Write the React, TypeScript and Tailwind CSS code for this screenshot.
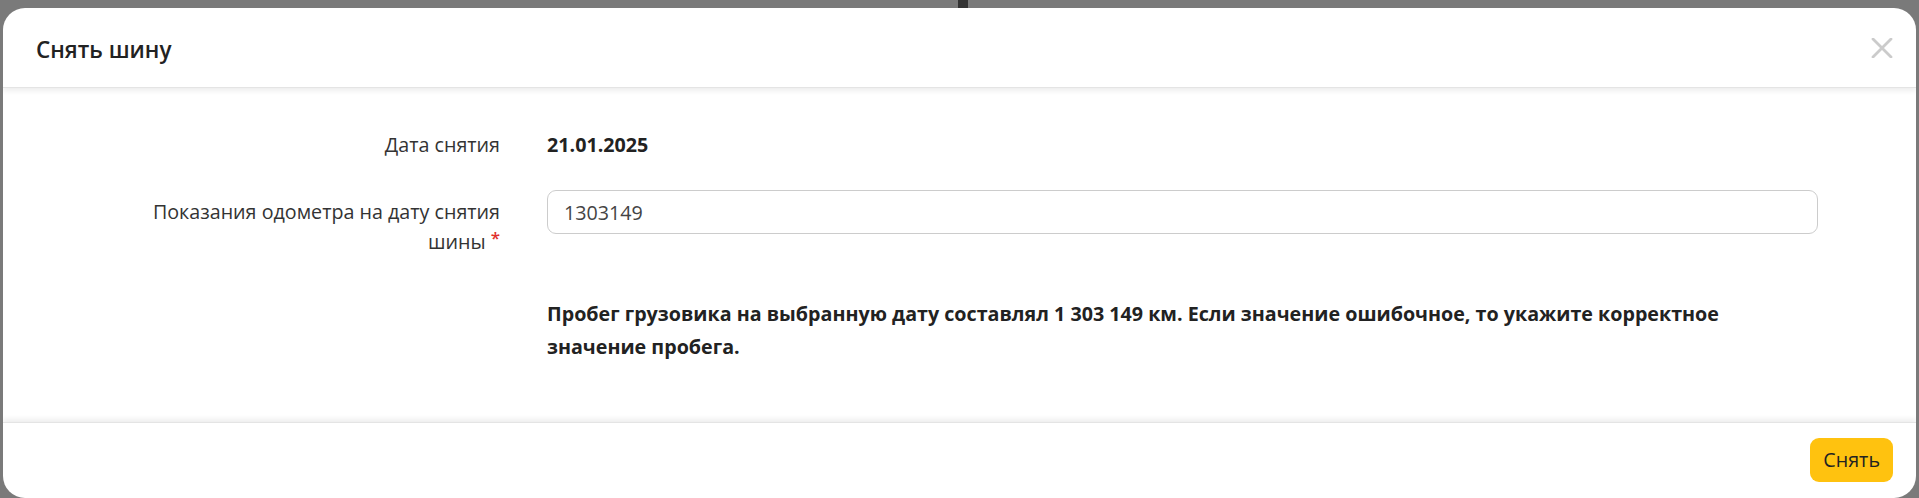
import React from 'react';

const font = { fontFamily: '"Open Sans", "Noto Sans", sans-serif' };

const FieldRow: React.FC<{ label: React.ReactNode; className?: string; labelClassName?: string; children: React.ReactNode }> = ({
    label,
    className = '',
    labelClassName = '',
    children,
}) => (
    <div className={`flex items-start ${className}`}>
        <div className={`w-[370px] flex-shrink-0 text-right text-[#333333] ${labelClassName}`}>{label}</div>
        <div className="flex-1 min-w-0 ml-[47px]">{children}</div>
    </div>
);

const App: React.FC = () => {
    return (
        <div
            className="relative h-[498px] w-full overflow-hidden bg-[#7a7a7a] pt-[8px] px-[3px]"
            style={font}
        >
            {/* page element peeking behind the overlay */}
            <div className="absolute top-0 left-[958px] w-[10px] h-[8px] bg-[#333333]"></div>

            <div className="h-[490px] bg-white rounded-[22px] flex flex-col overflow-hidden">
                {/* Header */}
                <div className="relative z-10 h-[80px] flex-shrink-0 flex items-center justify-between pl-[33px] pr-[23px] pt-[5px] border-b border-[#e4e4e4] shadow-[0_3px_5px_rgba(0,0,0,0.07)]">
                    <h2 className="text-[22.5px] font-semibold text-[#222222] leading-none">Снять шину</h2>
                    <button className="w-[22px] h-[20px] flex items-center justify-center -mt-[5px]" aria-label="Закрыть">
                        <svg width="22" height="20" viewBox="0 0 22 20" fill="none">
                            <path d="M2 1L20 19M20 1L2 19" stroke="#cbcbcb" strokeWidth="2.8" strokeLinecap="round" />
                        </svg>
                    </button>
                </div>

                {/* Body */}
                <div className="flex-1 pt-[41px] pl-[127px] pr-[98px] text-[19.7px] leading-[31px]">
                    <FieldRow label="Дата снятия">
                        <span className="font-bold text-[#222222]">21.01.2025</span>
                    </FieldRow>

                    <FieldRow
                        className="mt-[30px]"
                        labelClassName="pt-[7px] leading-[30px]"
                        label={
                            <>
                                <span className="block">Показания одометра на дату снятия</span>
                                <span className="block whitespace-nowrap">
                                    шины{' '}
                                    <span className="inline-block align-top leading-[22px] text-[#e0302d] font-semibold text-[17px]">*</span>
                                </span>
                            </>
                        }
                    >
                        <input
                            type="text"
                            defaultValue="1303149"
                            className="w-full h-[44px] rounded-[9px] border border-[#cccccc] px-[16px] text-[19.7px] text-[#444444] outline-none"
                            style={font}
                        />
                    </FieldRow>

                    <FieldRow className="mt-[40px]" label="">
                        <p className="max-w-[1210px] font-bold text-[#222222] leading-[33px]">
                            Пробег грузовика на выбранную дату составлял 1 303 149 км. Если значение ошибочное, то укажите
                            корректное значение пробега.
                        </p>
                    </FieldRow>
                </div>

                {/* Footer */}
                <div className="relative z-10 h-[76px] flex-shrink-0 flex items-center justify-end pr-[23px] pb-[2px] border-t border-[#e4e4e4] shadow-[0_-3px_5px_rgba(0,0,0,0.07)]">
                    <button className="h-[44px] px-[13px] rounded-[9px] bg-[#ffc20f] text-[19.7px] text-[#222222]">
                        Снять
                    </button>
                </div>
            </div>
        </div>
    );
};

export default App;
